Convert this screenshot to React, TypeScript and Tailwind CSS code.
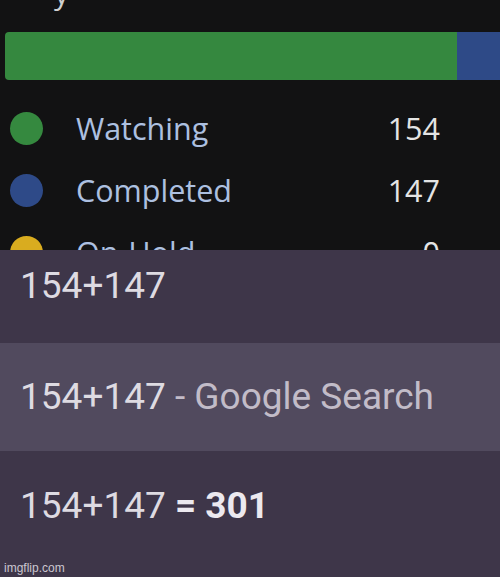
import React from 'react';

const stats = [
  { label: 'Watching', count: 154, dot: 'bg-[#35893f]' },
  { label: 'Completed', count: 147, dot: 'bg-[#2e4a88]' },
  { label: 'On-Hold', count: 0, dot: 'bg-[#d9ac1f]' },
];

const StatRow = ({ label, count, dot }: { label: string; count: number; dot: string }) => (
  <div className="flex items-center h-[62px] pl-[10px] pr-[60px]">
    <span className={`w-[33px] h-[33px] rounded-full shrink-0 ${dot}`} />
    <span className="ml-[33px] flex-1 text-[30.5px] leading-none text-[#adc0e0]">{label}</span>
    <span className="w-[60px] text-right text-[30.5px] leading-none text-[#e4e4e4]">{count}</span>
  </div>
);

export default function App() {
  return (
    <div className="relative w-[500px] h-[577px] overflow-hidden bg-[#121213] font-['Open_Sans',sans-serif]">
      <div className="h-[14px] overflow-hidden">
        <span className="block ml-[54px] -mt-[22px] text-[30px] leading-none text-[#cfcfcf]">y</span>
      </div>

      <div className="flex h-[48px] ml-[5px] mt-[18px]">
        <div className="w-[452px] bg-[#35883f] rounded-l-[4px]" />
        <div className="flex-1 bg-[#2e4a87]" />
      </div>

      <div className="mt-[17px]">
        {stats.map((s) => (
          <StatRow key={s.label} {...s} />
        ))}
      </div>

      <div className="absolute left-0 right-0 top-[250px] bottom-0 flex flex-col bg-[#3e3649] font-['Roboto',sans-serif] text-[37px] leading-none">
        <div className="h-[93px] pt-[17px] pl-[20px] text-[#dedbe2]">154+147</div>
        <div className="h-[108px] pt-[35px] pl-[20px] bg-[#514a5e] text-[#dedbe2]">
          154+147 <span className="text-[#c2bcc8]">- Google Search</span>
        </div>
        <div className="flex-1 pt-[36px] pl-[20px] text-[#dedbe2]">
          154+147 <span className="font-bold text-[#ece9ef]">= 301</span>
        </div>
      </div>

      <div className="absolute left-[4px] bottom-[3px] text-[12px] leading-none text-[#cbc6d0] font-['Liberation_Sans',sans-serif]">
        imgflip.com
      </div>
    </div>
  );
}
